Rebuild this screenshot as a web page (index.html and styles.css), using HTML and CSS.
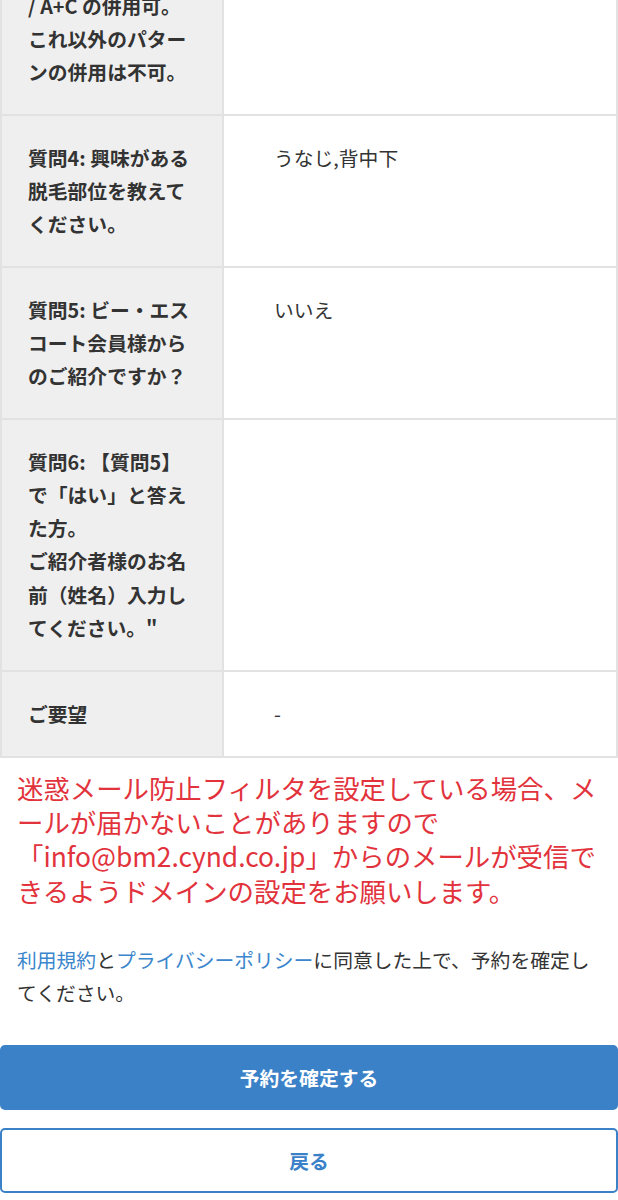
FILE: index.html
```html
<!DOCTYPE html>
<html lang="ja">
<head>
  <meta charset="UTF-8">
  <title>予約内容の確認</title>
  <link rel="stylesheet" href="styles.css">
</head>
<body>

<table class="confirm-table">
  <tr>
    <th>/ A+C の併用可。<br>これ以外のパターンの併用は不可。</th>
    <td></td>
  </tr>
  <tr>
    <th>質問4: 興味がある脱毛部位を教えてください。</th>
    <td>うなじ,背中下</td>
  </tr>
  <tr>
    <th>質問5: ビー・エスコート会員様からのご紹介ですか？</th>
    <td>いいえ</td>
  </tr>
  <tr>
    <th>質問6: 【質問5】で「はい」と答えた方。<br>ご紹介者様のお名前（姓名）入力してください。"</th>
    <td></td>
  </tr>
  <tr>
    <th>ご要望</th>
    <td>-</td>
  </tr>
</table>

<p class="notice">迷惑メール防止フィルタを設定している場合、メールが届かないことがありますので「info@bm2.cynd.co.jp」からのメールが受信できるようドメインの設定をお願いします。</p>

<p class="agree"><a href="#">利用規約</a>と<a href="#">プライバシーポリシー</a>に同意した上で、予約を確定してください。</p>

<div class="actions">
  <button type="submit" class="btn btn-primary">予約を確定する</button>
  <button type="button" class="btn btn-back">戻る</button>
</div>

</body>
</html>
```

FILE: styles.css
```css
body {
  margin: 0;
  font-family: "Noto Sans CJK JP", "Noto Sans", sans-serif;
  color: #333;
  background: #fff;
}
.confirm-table {
  width: 100%;
  margin-top: -38px;
  border-collapse: collapse;
  font-size: 19.8px;
  line-height: 33.2px;
}
.confirm-table th,
.confirm-table td {
  border: 2px solid #e2e2e2;
  vertical-align: top;
  text-align: left;
  padding: 24.5px 26px 26px;
}
.confirm-table th {
  width: 168px;
  background: #efefef;
  font-weight: bold;
}
.confirm-table td {
  padding-left: 50px;
  font-weight: normal;
}
.notice {
  margin: 13px 0 0;
  padding: 0 17px;
  color: #e2333d;
  font-size: 26.4px;
  line-height: 1.3;
}
.agree {
  margin: 35px 0 0;
  padding: 0 17px;
  font-size: 19.8px;
  line-height: 33px;
}
.agree a {
  color: #3b86cc;
  text-decoration: none;
}
.actions {
  margin-top: 36px;
  display: flex;
  flex-direction: column;
  gap: 18px;
}
.btn {
  display: block;
  width: 100%;
  height: 65px;
  font-family: inherit;
  font-size: 19.8px;
  font-weight: bold;
  border-radius: 5px;
  cursor: pointer;
}
.btn-primary {
  background: #3b81c8;
  color: #fff;
  border: none;
}
.btn-back {
  background: #fff;
  color: #3b81c8;
  border: 2px solid #3b81c8;
}
```
